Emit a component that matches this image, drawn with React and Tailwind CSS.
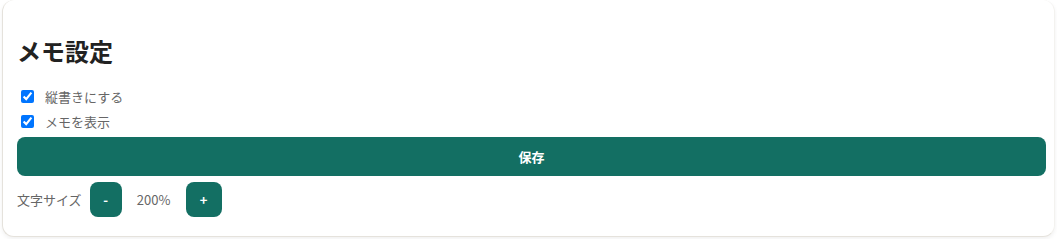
import { useState } from 'react';

export default function App() {
    const [vertical, setVertical] = useState(true);
    const [showMemo, setShowMemo] = useState(true);
    const [size, setSize] = useState(200);

    return (
        <div className="w-[1057px] h-[239px] bg-white pl-[2px] pr-[2px]" style={{ fontFamily: '"Noto Sans CJK JP", "Noto Sans", sans-serif' }}>
            <div className="h-[237px] rounded-xl border border-t-0 border-r-[#f3f2ef] border-[#e5e2dc] bg-white shadow-[0_2px_4px_rgba(0,0,0,0.06)] pl-[14px] pr-[8px]">
                <h2 className="pt-[35px] h-[84px] text-[24px] leading-[32px] font-bold text-[#222]">
                    メモ設定
                </h2>

                <label className="flex items-center h-[25px] text-[13px] text-[#666]">
                    <input
                        type="checkbox"
                        checked={vertical}
                        onChange={e => setVertical(e.target.checked)}
                        className="w-[13px] h-[13px] ml-[4px] mr-[11px]"
                    />
                    縦書きにする
                </label>
                <label className="flex items-center h-[25px] text-[13px] text-[#666]">
                    <input
                        type="checkbox"
                        checked={showMemo}
                        onChange={e => setShowMemo(e.target.checked)}
                        className="w-[13px] h-[13px] ml-[4px] mr-[11px]"
                    />
                    メモを表示
                </label>

                <button className="mt-[3px] w-full h-[39px] rounded-lg bg-[#136f63] text-white text-[13px] font-bold">
                    保存
                </button>

                <div className="mt-[6px] flex items-center h-[35px] text-[13px] text-[#666]">
                    <span>文字サイズ</span>
                    <button
                        onClick={() => setSize(s => s - 10)}
                        className="ml-[8px] w-[32px] h-[35px] rounded-lg bg-[#136f63] text-white text-[13px] font-bold"
                    >
                        -
                    </button>
                    <span className="w-[64px] text-center">{size}%</span>
                    <button
                        onClick={() => setSize(s => s + 10)}
                        className="w-[36px] h-[35px] rounded-lg bg-[#136f63] text-white text-[13px] font-bold"
                    >
                        +
                    </button>
                </div>
            </div>
        </div>
    );
}
